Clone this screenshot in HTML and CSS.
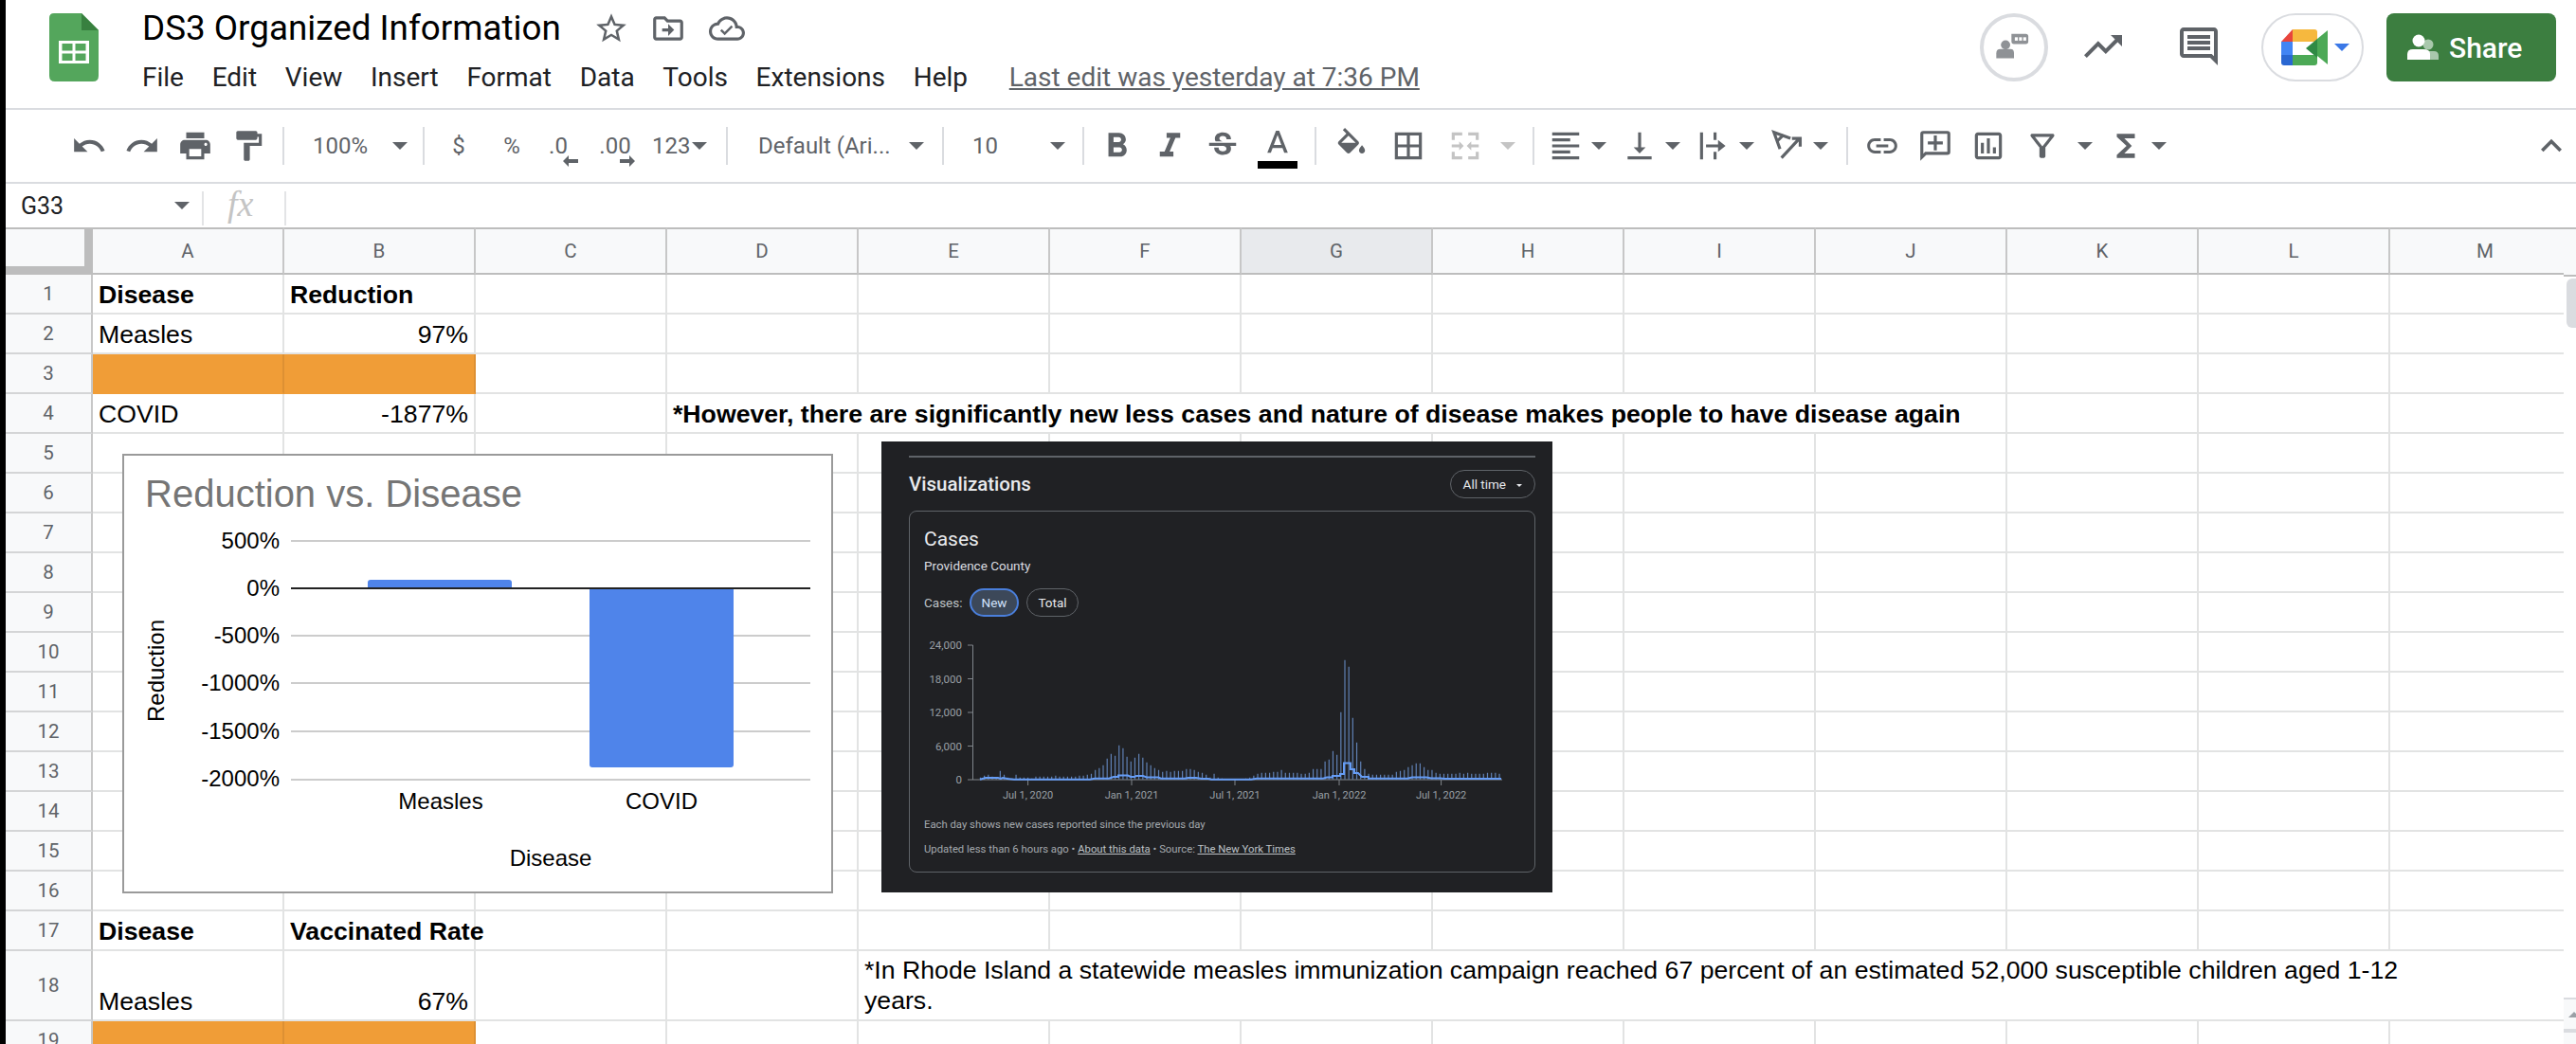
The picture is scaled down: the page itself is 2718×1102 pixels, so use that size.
FILE: index.html
```html
<!DOCTYPE html>
<html lang="en">
<head>
  <meta charset="UTF-8">
  <title>DS3 Organized Information</title>
  <link rel="stylesheet" href="styles.css">
</head>
<body>
<div class="app">

  <!-- Title bar -->
  <header class="topbar">
    <svg class="logo" viewBox="0 0 52 72">
      <path d="M5 0H34L52 18V66Q52 72 46 72H6Q0 72 0 66V5Q0 0 5 0Z" fill="#54a65c"/>
      <path d="M34 0V18H52Z" fill="#38803f"/>
      <rect x="10" y="29" width="32" height="24" fill="#fff"/>
      <rect x="13.5" y="32" width="11" height="7.5" fill="#54a65c"/>
      <rect x="27.5" y="32" width="11" height="7.5" fill="#54a65c"/>
      <rect x="13.5" y="42.5" width="11" height="7.5" fill="#54a65c"/>
      <rect x="27.5" y="42.5" width="11" height="7.5" fill="#54a65c"/>
    </svg>
    <div class="doc-info">
      <div class="doc-title-row">
        <span class="doc-title">DS3 Organized Information</span>
        <svg class="title-icon star" viewBox="0 0 24 24"><path d="M22 9.24l-7.19-.62L12 2 9.19 8.63 2 9.24l5.46 4.73L5.82 21 12 17.27 18.18 21l-1.63-7.03L22 9.24zM12 15.4l-3.76 2.27 1-4.28-3.32-2.88 4.38-.38L12 6.1l1.71 4.04 4.38.38-3.32 2.88 1 4.28L12 15.4z"/></svg>
        <svg class="title-icon folder" viewBox="0 0 24 24"><path d="M20 6h-8l-2-2H4c-1.1 0-2 .9-2 2v12c0 1.1.9 2 2 2h16c1.1 0 2-.9 2-2V8c0-1.1-.9-2-2-2zm0 12H4V6h5.17l2 2H20v10zm-8-4H8v-2h4V9l4 4-4 4v-3z"/></svg>
        <svg class="title-icon cloud" viewBox="0 0 24 24"><path d="M19.35 10.04C18.67 6.59 15.64 4 12 4 9.11 4 6.6 5.64 5.35 8.04 2.34 8.36 0 10.91 0 14c0 3.31 2.69 6 6 6h13c2.76 0 5-2.24 5-5 0-2.64-2.05-4.78-4.65-4.96zM19 18H6c-2.21 0-4-1.79-4-4s1.79-4 4-4h.71C7.37 7.69 9.48 6 12 6c3.04 0 5.5 2.46 5.5 5.5v.5H19c1.66 0 3 1.34 3 3s-1.34 3-3 3z"/><path d="M10.5 16.5l-3-3 1.1-1.1 1.9 1.9 4.4-4.4 1.1 1.1z"/></svg>
      </div>
      <nav class="menu">
        <span>File</span><span>Edit</span><span>View</span><span>Insert</span><span>Format</span><span>Data</span><span>Tools</span><span>Extensions</span><span>Help</span>
        <span class="last-edit">Last edit was yesterday at 7:36 PM</span>
      </nav>
    </div>
    <div class="actions">
      <div class="round-btn">
        <svg viewBox="0 0 72 72" width="68" height="68"><circle cx="26" cy="33" r="5.5" fill="#8f9296"/><path d="M15 49V43Q15 38 20 38H32Q36 38 36 43V49Z" fill="#8f9296"/><path d="M33 20H50Q53 20 53 23V29Q53 32 50 32H36Q33 32 33 29Z" fill="#8f9296"/><rect x="37" y="24" width="3.5" height="4" fill="#fff"/><rect x="42" y="24" width="3.5" height="4" fill="#fff"/><rect x="47" y="24" width="3.5" height="4" fill="#fff"/></svg>
      </div>
      <svg class="action-icon trend" viewBox="0 0 24 24"><path d="M16 6l2.29 2.29-4.88 4.88-4-4L2 16.59 3.41 18l6-6 4 4 6.3-6.29L22 12V6z"/></svg>
      <svg class="action-icon comments" viewBox="0 0 24 24"><path d="M21.99 4c0-1.1-.89-2-1.99-2H4c-1.1 0-2 .9-2 2v12c0 1.1.9 2 2 2h14l4 4-.01-18zM20 4v13.17L18.83 16H4V4h16zM6 12h12v2H6zm0-3h12v2H6zm0-3h12v2H6z"/></svg>
      <div class="meet-btn">
        <svg viewBox="0 0 49 38" width="49" height="38">
          <path d="M12 0H35Q38 0 38 3V13H12Z" fill="#f6b83e"/>
          <path d="M0 13L12 0V13Z" fill="#e8453c"/>
          <rect y="13" width="12" height="14" fill="#4285f4"/>
          <path d="M0 27H12V38H3Q0 38 0 35Z" fill="#2a67d2"/>
          <path d="M12 27H38V35Q38 38 35 38H12Z" fill="#4ca956"/>
          <path d="M26 20L38 10V30Z" fill="#2f8a45"/>
          <path d="M38 10L49 1V37L38 28Z" fill="#4ca956"/>
        </svg>
        <span class="caret caret-blue"></span>
      </div>
      <button class="share-btn">
        <svg viewBox="0 0 34 28" width="34" height="28"><circle cx="22" cy="11" r="5.5" fill="#a9c8ac"/><path d="M20 18H28Q33 18 33 23V27H24Z" fill="#a9c8ac"/><circle cx="12" cy="7" r="6.5" fill="#fff"/><path d="M0 27V21Q0 16 6 16H17Q24 16 24 21V27Z" fill="#fff"/></svg>
        <span>Share</span>
      </button>
    </div>
  </header>

  <!-- Toolbar -->
  <div class="toolbar">
    <span class="tb"><svg viewBox="0 0 24 24"><path d="M12.5 8c-2.65 0-5.05.99-6.9 2.6L2 7v9h9l-3.62-3.62c1.39-1.16 3.16-1.88 5.12-1.88 3.54 0 6.55 2.31 7.6 5.5l2.37-.78C21.08 11.03 17.15 8 12.5 8z"/></svg></span>
    <span class="tb"><svg viewBox="0 0 24 24"><path d="M18.4 10.6C16.55 8.99 14.15 8 11.5 8c-4.65 0-8.58 3.03-9.96 7.22L3.9 16c1.05-3.19 4.05-5.5 7.6-5.5 1.95 0 3.73.72 5.12 1.88L13 16h9V7l-3.6 3.6z"/></svg></span>
    <span class="tb"><svg viewBox="0 0 24 24"><path d="M19 8H5c-1.66 0-3 1.34-3 3v6h4v4h12v-4h4v-6c0-1.66-1.34-3-3-3zm-3 11H8v-5h8v5zm3-7c-.55 0-1-.45-1-1s.45-1 1-1 1 .45 1 1-.45 1-1 1zm-1-9H6v4h12V3z"/></svg></span>
    <span class="tb"><svg viewBox="0 0 24 24"><path d="M18 4V3c0-.55-.45-1-1-1H5c-.55 0-1 .45-1 1v4c0 .55.45 1 1 1h12c.55 0 1-.45 1-1V6h1v4H9v11c0 .55.45 1 1 1h2c.55 0 1-.45 1-1v-9h8V4h-3z"/></svg></span>
    <span class="tb-sep sep-zoom"></span>
    <span class="tb-select select-zoom"><span>100%</span><span class="caret"></span></span>
    <span class="tb-sep"></span>
    <span class="tb tb-text first-money">$</span>
    <span class="tb tb-text">%</span>
    <span class="tb tb-text dec dec-less">.0
      <svg class="dec-arrow" viewBox="0 0 16 12" width="16" height="12"><path d="M0 6L6 0V4H16V8H6V12Z"/></svg>
    </span>
    <span class="tb tb-text dec dec-more">.00
      <svg class="dec-arrow" viewBox="0 0 16 12" width="16" height="12"><path d="M16 6L10 0V4H0V8H10V12Z"/></svg>
    </span>
    <span class="tb-select select-format"><span>123</span><span class="caret"></span></span>
    <span class="tb-sep"></span>
    <span class="tb-select select-font"><span>Default (Ari...</span><span class="caret"></span></span>
    <span class="tb-sep"></span>
    <span class="tb-select select-size"><span>10</span><span class="caret"></span></span>
    <span class="tb-sep"></span>
    <span class="tb tb-large first-bold"><svg viewBox="0 0 24 24"><path d="M15.6 10.79c.97-.67 1.65-1.77 1.65-2.79 0-2.26-1.75-4-4-4H7v14h7.04c2.09 0 3.71-1.7 3.71-3.79 0-1.52-.86-2.82-2.15-3.42zM10 6.5h3c.83 0 1.5.67 1.5 1.5s-.67 1.5-1.5 1.5h-3v-3zm3.5 9H10v-3h3.5c.83 0 1.5.67 1.5 1.5s-.67 1.5-1.5 1.5z"/></svg></span>
    <span class="tb tb-large"><svg viewBox="0 0 24 24"><path d="M10 4v3h2.21l-3.42 8H6v3h8v-3h-2.21l3.42-8H18V4z"/></svg></span>
    <span class="tb"><svg viewBox="0 0 24 24"><path d="M6.85 7.08C6.85 4.37 9.45 3 12.24 3c1.64 0 3 .49 3.9 1.28.77.65 1.46 1.73 1.46 3.24h-3.01c0-.31-.05-.59-.15-.85-.29-.86-1.2-1.28-2.25-1.28-1.86 0-2.34 1.02-2.34 1.7 0 .48.25.88.74 1.21.38.25.77.48 1.41.7H7.39c-.21-.34-.54-.89-.54-1.92zM21 12v-2H3v2h9.62c1.15.45 1.96.75 1.96 1.97 0 1-.81 1.67-2.28 1.67-1.54 0-2.93-.54-2.93-2.51H6.4c0 .55.08 1.13.24 1.58.81 2.29 3.29 3.3 5.67 3.3 2.27 0 5.3-.89 5.3-4.05 0-.3-.01-1.16-.48-1.94H21V12z"/></svg></span>
    <span class="tb text-color"><svg viewBox="0 0 24 20"><path d="M11 1L5.5 15h2.25l1.12-3h6.25l1.12 3h2.25L13 1h-2zm-1.38 9L12 3.67 14.38 10H9.62z"/></svg><i class="color-bar"></i></span>
    <span class="tb-sep sep-fill"></span>
    <span class="tb tb-wide first-fill"><svg viewBox="0 0 24 24"><path d="M16.56 8.94L7.62 0 6.21 1.41l2.38 2.38-5.15 5.15c-.59.59-.59 1.54 0 2.12l5.5 5.5c.29.29.68.44 1.06.44s.77-.15 1.06-.44l5.5-5.5c.59-.58.59-1.53 0-2.12zM5.21 10L10 5.21 14.79 10H5.21zM19 11.5s-2 2.17-2 3.5c0 1.1.9 2 2 2s2-.9 2-2c0-1.33-2-3.5-2-3.5z"/></svg></span>
    <span class="tb tb-wide"><svg viewBox="0 0 24 24"><path d="M3 3v18h18V3H3zm8 16H5v-6h6v6zm0-8H5V5h6v6zm8 8h-6v-6h6v6zm0-8h-6V5h6v6z"/></svg></span>
    <span class="tb tb-wide disabled"><svg viewBox="0 0 24 24"><path d="M3 3h7v2H5v3H3zM14 3h7v5h-2V5h-5zM3 16h2v3h5v2H3zM14 19h5v-3h2v5h-7zM3 11h5V9l3 3-3 3v-2H3zM21 11h-5V9l-3 3 3 3v-2h5z"/></svg></span>
    <span class="tb-caret"><span class="caret caret-off"></span></span>
    <span class="tb-sep sep-align"></span>
    <span class="tb-menu first-align"><span class="tb tb-icon"><svg viewBox="0 0 24 24"><path d="M15 15H3v2h12v-2zm0-8H3v2h12V7zM3 13h18v-2H3v2zm0 8h18v-2H3v2zM3 3v2h18V3H3z"/></svg></span><span class="caret"></span></span>
    <span class="tb-menu"><span class="tb tb-icon"><svg viewBox="0 0 24 24"><path d="M16 13h-3V3h-2v10H8l4 4 4-4zM4 19v2h16v-2H4z"/></svg></span><span class="caret"></span></span>
    <span class="tb-menu"><span class="tb tb-icon"><svg viewBox="0 0 24 24"><path d="M3 3h2v18H3zM12 3h2v5h-2zM12 16h2v5h-2zM7 11h8V8l5 4-5 4v-3H7z"/></svg></span><span class="caret"></span></span>
    <span class="tb-menu"><span class="tb tb-icon"><svg class="stroke-icon" viewBox="0 0 24 24"><path d="M14 7L3 3l4 11M5 9l4.5-4.5M8 20L20 7M15 7h5.5v5.5"/></svg></span><span class="caret"></span></span>
    <span class="tb-sep sep-link"></span>
    <span class="tb first-link"><svg viewBox="0 0 24 24"><path d="M3.9 12c0-1.71 1.39-3.1 3.1-3.1h4V7H7c-2.76 0-5 2.24-5 5s2.24 5 5 5h4v-1.9H7c-1.71 0-3.1-1.39-3.1-3.1zM8 13h8v-2H8v2zm9-6h-4v1.9h4c1.71 0 3.1 1.39 3.1 3.1s-1.39 3.1-3.1 3.1h-4V17h4c2.76 0 5-2.24 5-5s-2.24-5-5-5z"/></svg></span>
    <span class="tb"><svg viewBox="0 0 24 24"><path d="M20 2H4a2 2 0 0 0-2 2v18l4-4h14a2 2 0 0 0 2-2V4a2 2 0 0 0-2-2zm0 14H5.17L4 17.17V4h16v12zM13 5h-2v4H7v2h4v4h2v-4h4V9h-4z"/></svg></span>
    <span class="tb"><svg viewBox="0 0 24 24"><path d="M19 3H5c-1.1 0-2 .9-2 2v14c0 1.1.9 2 2 2h14c1.1 0 2-.9 2-2V5c0-1.1-.9-2-2-2zm0 16H5V5h14v14zM9 10H7v7h2zm4-3h-2v10h2zm4 6h-2v4h2z"/></svg></span>
    <span class="tb-menu first-filter"><span class="tb tb-icon"><svg viewBox="0 0 24 24"><path d="M7 6h10l-5.01 6.3L7 6zm-2.75-.39C6.27 8.2 10 13 10 13v6c0 .55.45 1 1 1h2c.55 0 1-.45 1-1v-6s3.72-4.8 5.74-7.39C20.25 4.95 19.78 4 18.95 4H5.04c-.83 0-1.3.95-.79 1.61z"/></svg></span><span class="caret"></span></span>
    <span class="tb-menu"><span class="tb tb-icon"><svg viewBox="0 0 24 24"><path d="M18 4H6v2l6.5 6L6 18v2h12v-3h-7l5-5-5-5h7z"/></svg></span><span class="caret"></span></span>
    <span class="tb collapse"><svg viewBox="0 0 24 24"><path d="M7.41 15.41L12 10.83l4.59 4.58L18 14l-6-6-6 6z"/></svg></span>
  </div>

  <!-- Formula bar -->
  <div class="formula-bar">
    <div class="name-box"><span>G33</span><span class="caret"></span></div>
    <span class="fx-sep"></span>
    <span class="fx">fx</span>
    <span class="fx-sep"></span>
  </div>

  <!-- Sheet -->
  <div class="sheet-area">
    <div class="sheet-scroll">
      <table class="sheet">
        <colgroup>
          <col class="col-head"><col><col><col><col><col><col><col><col><col><col><col><col><col>
        </colgroup>
        <thead>
          <tr>
            <th class="corner"></th>
            <th>A</th><th>B</th><th>C</th><th>D</th><th>E</th><th>F</th><th class="active">G</th><th>H</th><th>I</th><th>J</th><th>K</th><th>L</th><th>M</th>
          </tr>
        </thead>
        <tbody>
          <tr><th>1</th><td class="bold">Disease</td><td class="bold">Reduction</td><td></td><td></td><td></td><td></td><td></td><td></td><td></td><td></td><td></td><td></td><td></td></tr>
          <tr><th>2</th><td>Measles</td><td class="num">97%</td><td></td><td></td><td></td><td></td><td></td><td></td><td></td><td></td><td></td><td></td><td></td></tr>
          <tr><th>3</th><td class="orange"></td><td class="orange"></td><td></td><td></td><td></td><td></td><td></td><td></td><td></td><td></td><td></td><td></td><td></td></tr>
          <tr><th>4</th><td>COVID</td><td class="num">-1877%</td><td></td><td class="bold" colspan="7">*However, there are significantly new less cases and nature of disease makes people to have disease again</td><td></td><td></td><td></td></tr>
          <tr><th>5</th><td></td><td></td><td></td><td></td><td></td><td></td><td></td><td></td><td></td><td></td><td></td><td></td><td></td></tr>
          <tr><th>6</th><td></td><td></td><td></td><td></td><td></td><td></td><td></td><td></td><td></td><td></td><td></td><td></td><td></td></tr>
          <tr><th>7</th><td></td><td></td><td></td><td></td><td></td><td></td><td></td><td></td><td></td><td></td><td></td><td></td><td></td></tr>
          <tr><th>8</th><td></td><td></td><td></td><td></td><td></td><td></td><td></td><td></td><td></td><td></td><td></td><td></td><td></td></tr>
          <tr><th>9</th><td></td><td></td><td></td><td></td><td></td><td></td><td></td><td></td><td></td><td></td><td></td><td></td><td></td></tr>
          <tr><th>10</th><td></td><td></td><td></td><td></td><td></td><td></td><td></td><td></td><td></td><td></td><td></td><td></td><td></td></tr>
          <tr><th>11</th><td></td><td></td><td></td><td></td><td></td><td></td><td></td><td></td><td></td><td></td><td></td><td></td><td></td></tr>
          <tr><th>12</th><td></td><td></td><td></td><td></td><td></td><td></td><td></td><td></td><td></td><td></td><td></td><td></td><td></td></tr>
          <tr><th>13</th><td></td><td></td><td></td><td></td><td></td><td></td><td></td><td></td><td></td><td></td><td></td><td></td><td></td></tr>
          <tr><th>14</th><td></td><td></td><td></td><td></td><td></td><td></td><td></td><td></td><td></td><td></td><td></td><td></td><td></td></tr>
          <tr><th>15</th><td></td><td></td><td></td><td></td><td></td><td></td><td></td><td></td><td></td><td></td><td></td><td></td><td></td></tr>
          <tr><th>16</th><td></td><td></td><td></td><td></td><td></td><td></td><td></td><td></td><td></td><td></td><td></td><td></td><td></td></tr>
          <tr><th>17</th><td class="bold">Disease</td><td class="bold">Vaccinated Rate</td><td></td><td></td><td></td><td></td><td></td><td></td><td></td><td></td><td></td><td></td><td></td></tr>
          <tr class="tall"><th>18</th><td>Measles</td><td class="num">67%</td><td></td><td></td><td colspan="9" class="note">*In Rhode Island a statewide measles immunization campaign reached 67 percent of an estimated 52,000 susceptible children aged 1-12<br>years.</td></tr>
          <tr><th>19</th><td class="orange"></td><td class="orange"></td><td></td><td></td><td></td><td></td><td></td><td></td><td></td><td></td><td></td><td></td><td></td></tr>
        </tbody>
      </table>

      <!-- Embedded chart -->
      <div class="chart">
        <svg class="chart-svg" viewBox="131 481 746 460" width="746" height="460">
          <text class="chart-title" x="153" y="535">Reduction vs. Disease</text>
          <path class="grid-line" d="M307 571H855M307 671H855M307 721H855M307 772H855M307 823H855"/>
          <path class="bar" d="M388 620V615Q388 612 391 612H537Q540 612 540 615V620Z"/>
          <path class="bar" d="M622 620H774V807Q774 810 771 810H625Q622 810 622 807Z"/>
          <path class="zero-line" d="M307 621H855"/>
          <g class="chart-ticks">
            <text x="295" y="579">500%</text>
            <text x="295" y="629">0%</text>
            <text x="295" y="679">-500%</text>
            <text x="295" y="729">-1000%</text>
            <text x="295" y="780">-1500%</text>
            <text x="295" y="830">-2000%</text>
          </g>
          <g class="chart-labels">
            <text x="465" y="854">Measles</text>
            <text x="698" y="854">COVID</text>
            <text x="581" y="914">Disease</text>
            <text x="173" y="708" transform="rotate(-90 173 708)">Reduction</text>
          </g>
        </svg>
      </div>

      <!-- Pasted dashboard picture -->
      <div class="viz">
        <div class="viz-rule"></div>
        <div class="viz-head">
          <span class="viz-title">Visualizations</span>
          <span class="viz-range">All time <i class="caret caret-tiny"></i></span>
        </div>
        <div class="viz-card">
          <div class="viz-card-title">Cases</div>
          <div class="viz-county">Providence County</div>
          <div class="viz-tabs">
            <span class="viz-tabs-label">Cases:</span>
            <span class="viz-tab viz-tab-on">New</span>
            <span class="viz-tab">Total</span>
          </div>
          <svg class="viz-chart" viewBox="975 672 630 180" width="630" height="180">
            <path class="viz-axis" d="M1026.5 681V823M1021 681H1026.5M1021 716.5H1026.5M1021 752H1026.5M1021 787.5H1026.5M1021 823H1585M1084.6 823V829M1194 823V829M1303 823V829M1413 823V829M1520.6 823V829"/>
            <path class="viz-bars" d="M1034.44 822.7v-2m4.18 2v-4m4.18 4v-5m4.18 5v-3m4.18 3v-2m4.18 2v-9m4.18 9v-5m4.18 5v-2m4.18 2v-1m4.18 1v-5m4.18 5v-2m4.18 2v-2m4.18 2v-2m4.18 2v-1m4.18 1v-3m4.18 3v-3m4.18 3v-3m4.18 3v-3m4.18 3v-3m4.18 3v-4m4.18 4v-3m4.18 3v-3m4.18 3v-3m4.18 3v-3m4.18 3v-3m4.18 3v-4m4.18 4v-4m4.18 4v-5m4.18 5v-6m4.18 6v-10m4.18 10v-12m4.18 12v-15m4.18 15v-22m4.18 22v-27m4.18 27v-25m4.18 25v-36m4.18 36v-33m4.18 33v-24m4.18 24v-19m4.18 19v-23m4.18 23v-27m4.18 27v-23m4.18 23v-18m4.18 18v-15m4.18 15v-12m4.18 12v-10m4.18 10v-8m4.18 8v-9m4.18 9v-8m4.18 8v-9m4.18 9v-9m4.18 9v-9m4.18 9v-11m4.18 11v-11m4.18 11v-10m4.18 10v-8m4.18 8v-7m4.18 7v-5m4.18 5v-2m4.18 2v-6m4.18 6v-2m4.18 2v-1m25.08 1v-1m4.18 1v-2m4.18 2v-4m4.18 4v-6m4.18 6v-7m4.18 7v-7m4.18 7v-7m4.18 7v-8m4.18 8v-8m4.18 8v-10m4.18 10v-7m4.18 7v-7m4.18 7v-7m4.18 7v-7m4.18 7v-6m4.18 6v-6m4.18 6v-7m4.18 7v-11m4.18 11v-11m4.18 11v-11m4.18 11v-19m4.18 19v-21m4.18 21v-30m4.18 30v-26m4.18 26v-71m4.18 71v-126m4.18 126v-119m4.18 119v-65m4.18 65v-39m4.18 39v-19m4.18 19v-11m4.18 11v-6m4.18 6v-5m4.18 5v-5m4.18 5v-5m4.18 5v-5m4.18 5v-5m4.18 5v-5m4.18 5v-8m4.18 8v-9m4.18 9v-10m4.18 10v-13m4.18 13v-15m4.18 15v-17m4.18 17v-17m4.18 17v-13m4.18 13v-10m4.18 10v-10m4.18 10v-7m4.18 7v-6m4.18 6v-6m4.18 6v-6m4.18 6v-6m4.18 6v-6m4.18 6v-7m4.18 7v-6m4.18 6v-7m4.18 7v-6m4.18 6v-6m4.18 6v-6m4.18 6v-6m4.18 6v-7m4.18 7v-7m4.18 7v-7m4.18 7v-6"/>
            <path class="viz-line" d="M1034 822.7L1040 821H1053L1056 822L1058 821L1063 822L1070 822.7H1150L1155 821.7H1170L1175 820H1180V818.5H1190L1193 820H1197L1199 819H1206L1210 820.5H1222L1225 821.7H1250L1254 821H1262L1268 822H1275L1278 822.7H1320L1326 821.7H1396L1400 820.5H1406V819H1414V817H1418V805.5H1425V812H1429V816H1433L1437 820H1444V821.7H1485L1490 820.5H1505L1510 821.5H1520L1524 822H1584"/>
            <g class="viz-y">
              <text x="1015" y="685">24,000</text>
              <text x="1015" y="720.5">18,000</text>
              <text x="1015" y="756">12,000</text>
              <text x="1015" y="791.5">6,000</text>
              <text x="1015" y="827">0</text>
            </g>
            <g class="viz-x">
              <text x="1084.6" y="843">Jul 1, 2020</text>
              <text x="1194" y="843">Jan 1, 2021</text>
              <text x="1303" y="843">Jul 1, 2021</text>
              <text x="1413" y="843">Jan 1, 2022</text>
              <text x="1520.6" y="843">Jul 1, 2022</text>
            </g>
          </svg>
          <div class="viz-note viz-note-first">Each day shows new cases reported since the previous day</div>
          <div class="viz-note">Updated less than 6 hours ago • <u>About this data</u> • Source: <u>The New York Times</u></div>
        </div>
      </div>
    </div>

    <div class="vscroll">
      <div class="vscroll-head"></div>
      <div class="vscroll-thumb"></div>
      <div class="vscroll-btn"><i class="scroll-up"></i></div>
      <div class="vscroll-btn vscroll-down"></div>
    </div>
  </div>
</div>
</body>
</html>
```

FILE: styles.css
```css
html, body {
  margin: 0;
  height: 100%;
  overflow: hidden;
}
body {
  background-color: #000;
  font-family: Roboto, sans-serif;
  color: #202124;
}
.app {
  margin-left: 6px;
  height: 1102px;
  background-color: #fff;
  display: flex;
  flex-direction: column;
  overflow: hidden;
}

/* Title bar */
.topbar {
  height: 116px;
  box-sizing: border-box;
  border-bottom: 2px solid #dadce0;
  display: flex;
  flex-shrink: 0;
}
.logo {
  width: 52px;
  height: 72px;
  margin: 14px 0 0 46px;
  flex-shrink: 0;
}
.doc-info {
  margin-left: 46px;
  padding-top: 6px;
}
.doc-title-row {
  display: flex;
  align-items: center;
  height: 48px;
}
.doc-title {
  font-size: 36.8px;
  line-height: 48px;
  color: #000;
}
.title-icon {
  width: 38px;
  height: 38px;
  fill: #5f6368;
}
.title-icon.star {
  margin-left: 34px;
}
.title-icon.folder {
  margin-left: 22px;
}
.title-icon.cloud {
  margin-left: 24px;
}
.menu {
  display: flex;
  margin-top: 10px;
  font-size: 28px;
  line-height: 36px;
  gap: 29.7px;
}
.last-edit {
  margin-left: 14px;
  color: #5f6368;
  text-decoration: underline;
}
.actions {
  margin-left: auto;
  padding: 14px 21px 0 0;
  display: flex;
  align-items: flex-start;
}
.round-btn {
  width: 72px;
  height: 72px;
  box-sizing: border-box;
  border: 4px solid #dadce0;
  border-radius: 50%;
  display: flex;
  align-items: center;
  justify-content: center;
}
.action-icon {
  width: 48px;
  height: 48px;
  fill: #5f6368;
  margin-top: 11px;
}
.trend {
  margin-left: 34px;
}
.comments {
  margin-left: 53px;
}
.meet-btn {
  width: 108px;
  height: 72px;
  box-sizing: border-box;
  margin-left: 42px;
  border: 2px solid #dadce0;
  border-radius: 36px;
  display: flex;
  align-items: center;
  padding-left: 19px;
  gap: 7px;
}
.share-btn {
  width: 179px;
  height: 72px;
  margin-left: 24px;
  padding: 0 0 0 22px;
  border: none;
  border-radius: 8px;
  background-color: #3c7e40;
  color: #fff;
  font-family: Roboto, sans-serif;
  font-size: 30px;
  font-weight: 500;
  display: flex;
  align-items: center;
  gap: 10px;
}

/* Carets */
.caret {
  display: inline-block;
  width: 0;
  height: 0;
  flex-shrink: 0;
  border-left: 8px solid transparent;
  border-right: 8px solid transparent;
  border-top: 8px solid #5f6368;
}
.caret-blue {
  border-top-color: #3b78e7;
}
.caret-off {
  border-top-color: #c4c4c4;
}
.caret-tiny {
  margin-left: 8px;
  border-left-width: 3px;
  border-right-width: 3px;
  border-top: 3px solid #e8eaed;
  vertical-align: middle;
}

/* Toolbar */
.toolbar {
  height: 78px;
  box-sizing: border-box;
  border-bottom: 2px solid #dadce0;
  padding-left: 60px;
  display: flex;
  align-items: center;
  flex-shrink: 0;
  color: #5f6368;
  font-size: 24px;
}
.tb {
  width: 56px;
  height: 44px;
  flex-shrink: 0;
  display: flex;
  align-items: center;
  justify-content: center;
  position: relative;
}
.tb svg {
  width: 38px;
  height: 38px;
  fill: #5f6368;
}
.tb-large svg {
  width: 43px;
  height: 43px;
}
.tb-wide {
  width: 60px;
}
.tb-icon {
  width: 54px;
}
.tb-sep {
  width: 2px;
  height: 40px;
  background-color: #dadce0;
  flex-shrink: 0;
}
.sep-zoom {
  margin-left: 8px;
}
.sep-fill {
  margin-left: 11px;
}
.sep-align {
  margin-left: 11px;
}
.sep-link {
  margin-left: 19px;
}
.tb-select {
  display: flex;
  align-items: center;
  justify-content: space-between;
  box-sizing: border-box;
  flex-shrink: 0;
}
.select-zoom {
  width: 146px;
  padding: 0 16px 0 30px;
}
.select-format {
  width: 78px;
  padding-right: 20px;
}
.select-font {
  width: 226px;
  padding: 0 19px 0 32px;
}
.select-size {
  width: 146px;
  padding: 0 18px 0 30px;
}
.first-money {
  margin-left: 8px;
}
.dec-less {
  width: 42px;
}
.dec-more {
  width: 78px;
}
.tb .dec-arrow {
  position: absolute;
  top: 32px;
  width: 16px;
  height: 12px;
}
.dec-less .dec-arrow {
  left: 26px;
}
.dec-more .dec-arrow {
  left: 44px;
}
.first-bold {
  margin-left: 6px;
}
.text-color {
  flex-direction: column;
  justify-content: flex-start;
  height: 48px;
  box-sizing: border-box;
  padding-top: 6px;
  margin-left: 2px;
}
.tb.text-color svg {
  width: 40px;
  height: 34px;
}
.color-bar {
  width: 42px;
  height: 8px;
  background-color: #000;
}
.first-fill {
  margin-left: 7px;
}
.disabled svg {
  fill: #c4c4c4;
}
.tb-caret {
  width: 30px;
  display: flex;
  justify-content: center;
  flex-shrink: 0;
}
.first-align {
  margin-left: 6px;
}
.tb-menu {
  display: flex;
  align-items: center;
  margin-right: 8px;
  flex-shrink: 0;
}
.tb-menu:has(+ .tb-sep) {
  margin-right: 0;
}
.stroke-icon path {
  fill: none;
  stroke: #5f6368;
  stroke-width: 2;
}
.first-link {
  margin-left: 8px;
}
.first-filter {
  margin-left: 2px;
}
.first-filter .caret {
  margin-left: 10px;
}
.collapse {
  margin-left: auto;
  margin-right: -2px;
}
.tb.collapse svg {
  width: 44px;
  height: 44px;
}

/* Formula bar */
.formula-bar {
  height: 46px;
  display: flex;
  align-items: flex-end;
  flex-shrink: 0;
}
.name-box {
  width: 207px;
  height: 46px;
  box-sizing: border-box;
  padding: 0 13px 0 16px;
  display: flex;
  align-items: center;
  justify-content: space-between;
  font-size: 25px;
  color: #202124;
}
.fx-sep {
  width: 2px;
  height: 36px;
  margin-bottom: 2px;
  background-color: #e3e4e6;
}
.fx {
  width: 85px;
  height: 46px;
  box-sizing: border-box;
  padding-left: 25px;
  font-family: "Liberation Serif", serif;
  font-style: italic;
  font-size: 38px;
  line-height: 42px;
  color: #c4c4c4;
}

/* Sheet */
.sheet-area {
  flex: 1;
  display: flex;
  min-height: 0;
  overflow: hidden;
}
.sheet-scroll {
  width: 2699px;
  position: relative;
  overflow: hidden;
  flex-shrink: 0;
}
.sheet {
  table-layout: fixed;
  width: 2718px;
  border-collapse: separate;
  border-spacing: 0;
  font-family: "Liberation Sans", Arial, sans-serif;
  font-size: 26.67px;
  color: #000;
}
.col-head {
  width: 92px;
}
.sheet th, .sheet td {
  box-sizing: border-box;
  height: 42px;
  padding: 0;
}
.sheet thead th {
  height: 50px;
  background-color: #f8f9fa;
  border-top: 2px solid #bdbdbd;
  border-bottom: 2px solid #bdbdbd;
  border-right: 2px solid #c7c7c7;
  font-family: Roboto, sans-serif;
  font-size: 20.5px;
  font-weight: 400;
  color: #5f6368;
}
.sheet thead th.active {
  background-color: #e8eaed;
}
.sheet thead th.corner {
  border-right: 9px solid #bdbdbd;
  border-bottom: 9px solid #bdbdbd;
  background-color: #f8f9fa;
}
.sheet tbody th {
  background-color: #f8f9fa;
  border-right: 2px solid #c7c7c7;
  border-bottom: 2px solid #d4d5d6;
  font-family: Roboto, sans-serif;
  font-size: 20.5px;
  font-weight: 400;
  color: #5f6368;
}
.sheet td {
  border-right: 2px solid #e2e3e3;
  border-bottom: 2px solid #e2e3e3;
  padding: 0 6px 4px;
  vertical-align: bottom;
  line-height: 30px;
  white-space: nowrap;
}
.sheet td.bold {
  font-weight: bold;
}
.sheet td.num {
  text-align: right;
}
.sheet td.orange {
  background-color: #f09d37;
  border-right-color: #dd9033;
  border-bottom-color: #f09d37;
}
.sheet tr.tall th, .sheet tr.tall td {
  height: 74px;
}
.sheet td.note {
  line-height: 32px;
}

/* Embedded chart */
.chart {
  position: absolute;
  left: 123px;
  top: 239px;
  width: 750px;
  height: 464px;
  box-sizing: border-box;
  border: 2px solid #9a9a9a;
  background-color: #fff;
}
.chart-svg {
  display: block;
  font-family: "Liberation Sans", Arial, sans-serif;
}
.chart-title {
  font-size: 40px;
  fill: #757575;
}
.grid-line {
  fill: none;
  stroke: #cccccc;
  stroke-width: 2;
}
.zero-line {
  fill: none;
  stroke: #222;
  stroke-width: 2;
}
.bar {
  fill: #4f84ea;
}
.chart-ticks text {
  font-size: 24px;
  text-anchor: end;
}
.chart-labels text {
  font-size: 24px;
  text-anchor: middle;
}

/* Pasted dashboard picture */
.viz {
  position: absolute;
  left: 924px;
  top: 226px;
  width: 708px;
  height: 476px;
  box-sizing: border-box;
  padding: 15px 18px 0 29px;
  background-color: #202124;
  color: #e8eaed;
}
.viz-rule {
  height: 2px;
  background-color: #5f6368;
}
.viz-head {
  display: flex;
  justify-content: space-between;
  align-items: center;
  margin-top: 13px;
  height: 30px;
}
.viz-title {
  font-size: 20.5px;
  font-weight: 500;
}
.viz-range {
  width: 90px;
  height: 30px;
  box-sizing: border-box;
  border: 1px solid #5f6368;
  border-radius: 15px;
  font-size: 13.5px;
  line-height: 28px;
  text-align: center;
}
.viz-card {
  margin-top: 13px;
  height: 382px;
  box-sizing: border-box;
  border: 1.5px solid #5f6368;
  border-radius: 8px;
  padding: 16px 0 0 15px;
}
.viz-card-title {
  font-size: 21px;
  line-height: 26px;
}
.viz-county {
  margin-top: 6px;
  font-size: 13.5px;
  line-height: 18px;
  color: #dadce0;
}
.viz-tabs {
  display: flex;
  align-items: center;
  margin-top: 15px;
  font-size: 13.5px;
}
.viz-tabs-label {
  color: #bdc1c6;
  margin-right: 7px;
}
.viz-tab {
  height: 30px;
  box-sizing: border-box;
  padding: 0 11px;
  margin-right: 8px;
  border: 1px solid #5f6368;
  border-radius: 15px;
  line-height: 28px;
}
.viz-tab-on {
  background-color: #3c4859;
  border: 2px solid #4a7fdc;
  line-height: 26px;
  color: #d2e3fc;
}
.viz-chart {
  display: block;
  margin-top: 21px;
}
.viz-axis {
  fill: none;
  stroke: #80868b;
  stroke-width: 1;
}
.viz-bars {
  fill: none;
  stroke: #5f80b4;
  stroke-width: 1.2;
}
.viz-line {
  fill: none;
  stroke: #669df6;
  stroke-width: 2;
}
.viz-y text, .viz-x text {
  font-size: 11.5px;
  fill: #9aa0a6;
}
.viz-y text {
  text-anchor: end;
}
.viz-x text {
  font-size: 11px;
  text-anchor: middle;
}
.viz-note {
  font-size: 11.3px;
  line-height: 16px;
  color: #a4a9ae;
  margin-top: 10px;
}
.viz-note-first {
  margin-top: 11px;
}
.viz-note u {
  color: #bdc1c6;
}

/* Vertical scrollbar */
.vscroll {
  width: 13px;
  flex-shrink: 0;
  display: flex;
  flex-direction: column;
}
.vscroll-head {
  height: 48px;
  background-color: #f8f9fa;
  border-top: 2px solid #bdbdbd;
  border-bottom: 2px solid #bdbdbd;
}
.vscroll-thumb {
  width: 10px;
  height: 52px;
  margin: 2px 0 0 3px;
  border-radius: 6px 0 0 6px;
  background-color: #dadce0;
}
.vscroll-btn {
  margin-top: auto;
  height: 31px;
  background-color: #f8f9fa;
  border-top: 2px solid #dadce0;
  border-bottom: 2px solid #dadce0;
  display: flex;
  align-items: center;
  padding-left: 5px;
}
.vscroll-down {
  margin-top: 0;
  height: 12px;
  border-bottom: none;
}
.scroll-up {
  width: 0;
  height: 0;
  border-left: 6px solid transparent;
  border-right: 6px solid transparent;
  border-bottom: 6px solid #9aa0a6;
}
```
